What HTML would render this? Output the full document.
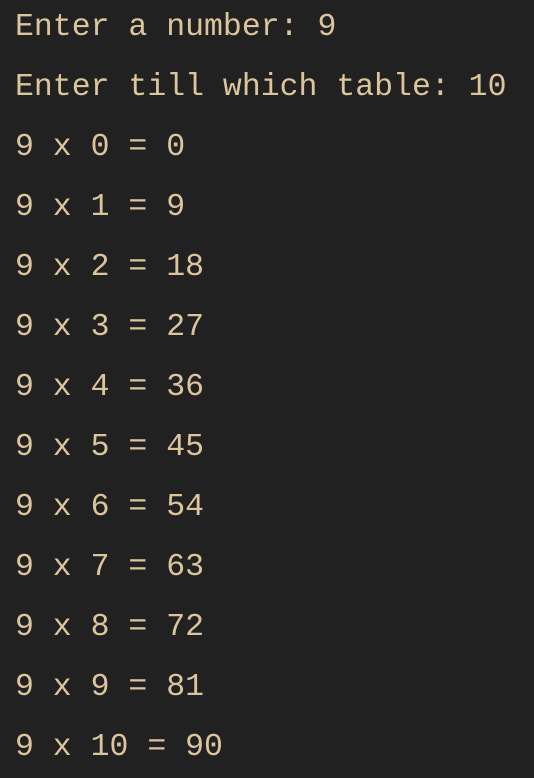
<!DOCTYPE html>
<html><head><meta charset="utf-8"><style>
html,body{margin:0;padding:0;background:#212121;width:534px;height:772px;overflow:hidden}
pre{margin:0;padding:-2px 0 0 0;position:absolute;top:-2px;left:15px;font-family:"Liberation Mono",monospace;font-size:31.5px;line-height:60px;color:#dcc59c;white-space:pre}
</style></head><body><pre>Enter a number: 9
Enter till which table: 10
9 x 0 = 0
9 x 1 = 9
9 x 2 = 18
9 x 3 = 27
9 x 4 = 36
9 x 5 = 45
9 x 6 = 54
9 x 7 = 63
9 x 8 = 72
9 x 9 = 81
9 x 10 = 90</pre></body></html>
